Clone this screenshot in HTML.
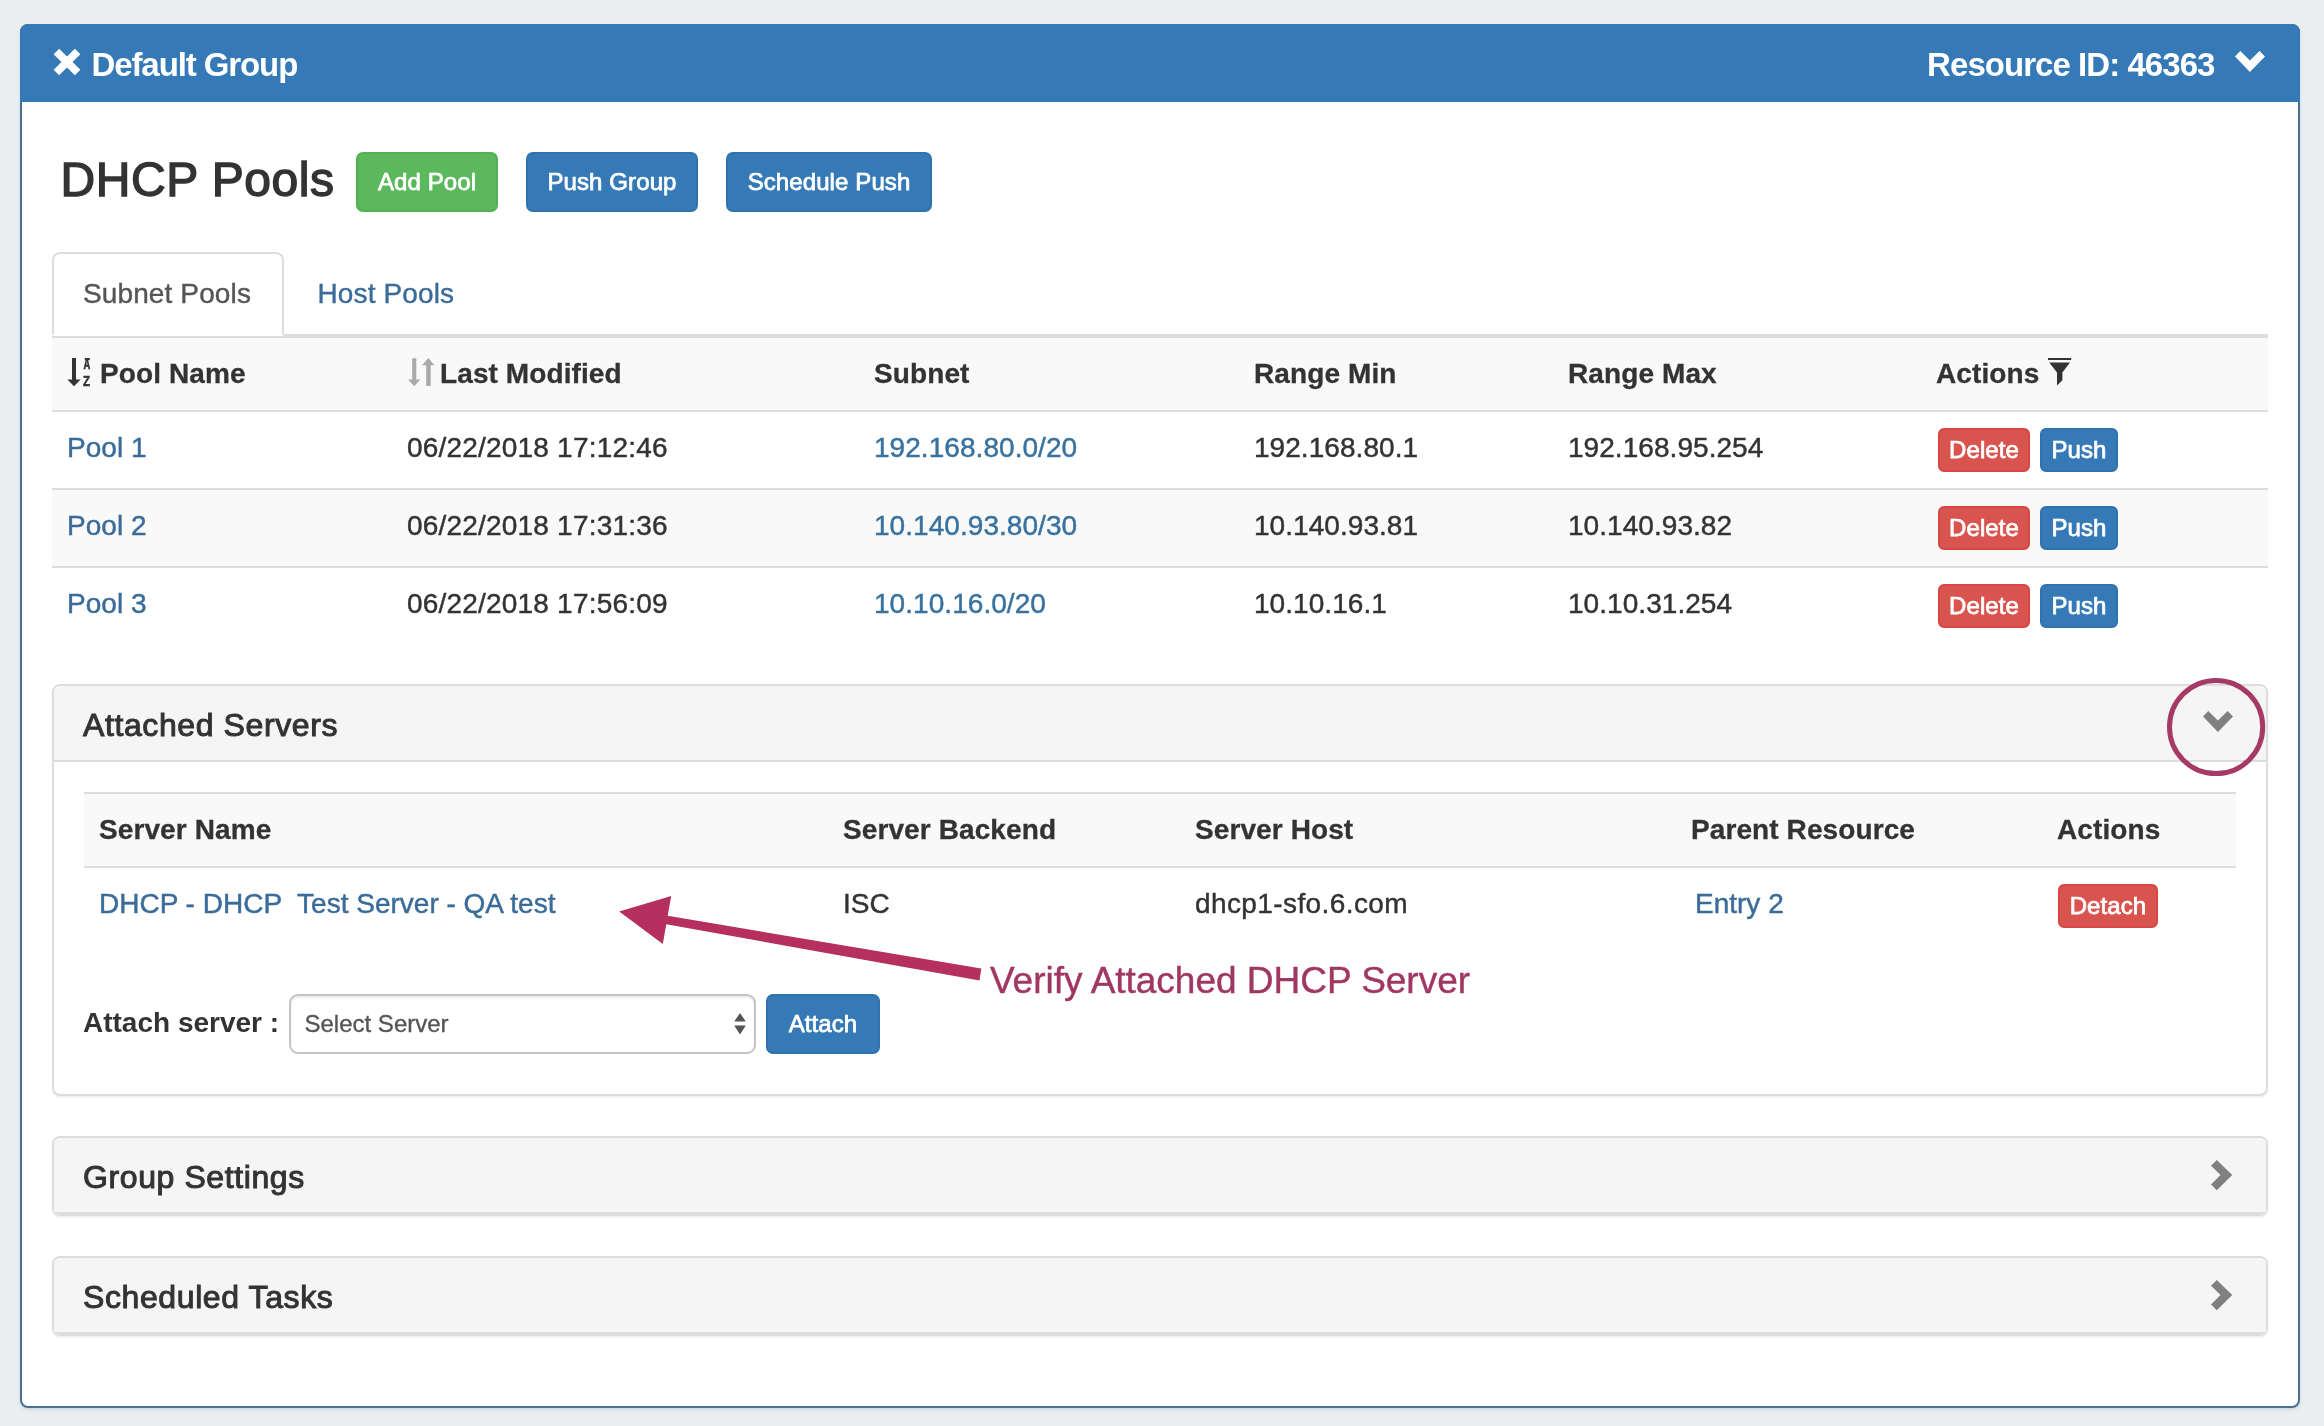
<!DOCTYPE html>
<html lang="en">
<head>
<meta charset="utf-8">
<title>DHCP Pools - Default Group</title>
<style>
*{box-sizing:border-box;}
html,body{margin:0;padding:0;}
body{width:2324px;height:1426px;overflow:hidden;background:#eaeef1;font-family:"Liberation Sans",sans-serif;font-size:28px;line-height:40px;color:#333;position:relative;}
a{color:#3b6b99;text-decoration:none;}
a.sn{color:#38729f;}
svg{display:block;position:absolute;overflow:visible;}
.abs{position:absolute;white-space:nowrap;}
#page{position:absolute;left:0;top:0;width:2324px;height:1426px;will-change:transform;}

/* outer panel */
.panel-main{position:absolute;left:20px;top:24px;width:2280px;height:1384px;background:#fff;border:2px solid #4d7091;border-radius:8px;box-shadow:0 2px 3px rgba(120,150,180,.25);}
.panel-main>.heading{position:absolute;left:-2px;top:-2px;width:2280px;height:78px;background:#357ab7;border-radius:8px 8px 0 0;color:#fff;font-weight:bold;font-size:33px;line-height:36px;}
.heading .title{left:71.5px;top:22.5px;letter-spacing:-1.1px;}
.heading .rid{right:85.5px;top:22.5px;letter-spacing:-.95px;}

/* title row */
h3.pools{position:absolute;margin:0;left:60.5px;top:152px;font-size:48px;line-height:56px;font-weight:normal;color:#333;white-space:nowrap;letter-spacing:.55px;-webkit-text-stroke:1.4px #333;}
.btn{position:absolute;display:block;color:#fff;-webkit-text-stroke:.75px #fff;letter-spacing:.1px;text-align:center;white-space:nowrap;font-size:24px;line-height:36px;border:2px solid transparent;border-radius:7px;padding:0;}
.btn-sm{height:60px;padding-top:10px;}
.btn-xs{height:44px;padding-top:2px;border-radius:6px;}
.btn-success{background:#5cb85c;border-color:#52b152;}
.btn-primary{background:#357ab7;border-color:#3072ab;}
.btn-danger{background:#d9534f;border-color:#d54843;}

/* tabs */
.nav-tabs{position:absolute;left:52px;top:252px;width:2216px;height:84px;margin:0;padding:0;list-style:none;border-bottom:2px solid #ddd;}
.nav-tabs li{position:absolute;top:0;height:84px;}
.nav-tabs li a{display:block;height:84px;padding:20px 30px;letter-spacing:.12px;-webkit-text-stroke:.4px;border:2px solid transparent;border-radius:8px 8px 0 0;line-height:40px;white-space:nowrap;}
.nav-tabs li.active a{color:#555;background:#fff;border-color:#ddd #ddd #fff #ddd;}

/* tables */
table{border-collapse:separate;border-spacing:0;table-layout:fixed;position:absolute;}
th,td{padding:0 0 0 15px;text-align:left;vertical-align:top;white-space:nowrap;overflow:visible;position:relative;}
th{font-weight:bold;letter-spacing:.1px;-webkit-text-stroke:.3px;}
table.pools{left:52px;top:336px;width:2216px;}
table.pools th{height:74px;padding-top:16px;border-top:2px solid #ddd;background:#f9f9f9;}
table.pools td{height:78px;padding-top:16px;letter-spacing:.05px;-webkit-text-stroke:.45px;border-top:2px solid #ddd;}
table.pools tr.odd td{background:#f9f9f9;}
table.pools td.dt{letter-spacing:.2px;}

/* sub panels */
.panel{position:absolute;left:52px;width:2216px;border:2px solid #ddd;border-radius:8px;background:#fff;box-shadow:0 2px 2px rgba(0,0,0,.05);}
.panel .ph{height:76px;background:#f5f5f5;border-bottom:2px solid #ddd;border-radius:6px 6px 0 0;position:relative;}
.panel .ph h4{margin:0;position:absolute;left:29px;top:21px;font-size:32px;line-height:36px;font-weight:normal;color:#333;white-space:nowrap;letter-spacing:.6px;-webkit-text-stroke:1px #333;}
table.servers{left:30px;top:106px;width:2152px;}
table.servers th{height:74px;padding-top:16px;border-top:2px solid #ddd;background:#f9f9f9;}
table.servers td{height:76px;padding-top:16px;-webkit-text-stroke:.45px;border-top:2px solid #ddd;}
.select{position:absolute;left:235px;top:308px;width:467px;height:60px;border:2px solid #c4c4c4;border-radius:9px;background:#fff;color:#555;font-size:24px;line-height:36px;padding:10px 0 0 13.5px;-webkit-text-stroke:.35px;box-shadow:inset 0 2px 2px rgba(0,0,0,.075);}
</style>
</head>
<body>
<div id="page">

<div class="panel-main">
  <div class="heading">
    <svg style="left:33px;top:24px" width="28" height="28" viewBox="-14 -14 28 28"><g transform="rotate(45)" fill="#fff"><rect x="-15" y="-3.9" width="30" height="7.8"/><rect x="-3.9" y="-15" width="7.8" height="30"/></g></svg>
    <span class="abs title">Default Group</span>
    <span class="abs rid">Resource ID: 46363</span>
    <svg style="left:2215px;top:27px" width="30" height="21" viewBox="0 0 30 21"><polygon fill="#fff" points="0,5.4 5.3,0 14.9,9.5 24.6,0 30,5.4 14.9,21"/></svg>
  </div>
</div>

<h3 class="pools">DHCP Pools</h3>
<a class="btn btn-sm btn-success" style="left:356px;top:152px;width:142px">Add Pool</a>
<a class="btn btn-sm btn-primary" style="left:526px;top:152px;width:172px">Push Group</a>
<a class="btn btn-sm btn-primary" style="left:726px;top:152px;width:206px">Schedule Push</a>

<ul class="nav-tabs">
  <li class="active" style="left:0"><a style="width:232px;padding-left:29px">Subnet Pools</a></li>
  <li style="left:233.5px"><a>Host Pools</a></li>
</ul>

<table class="pools">
  <colgroup><col style="width:340px"><col style="width:467px"><col style="width:380px"><col style="width:314px"><col style="width:368px"><col style="width:347px"></colgroup>
  <thead>
    <tr>
      <th><svg style="left:15px;top:20px" width="24" height="30" viewBox="0 0 24 30"><path fill="#333" d="M5 0h4v21.5h4.6L7 28.2 .4 21.5H5z"/><text x="0" y="11.4" font-family="Liberation Sans, sans-serif" font-weight="bold" font-size="15.5" fill="#333" stroke="#333" stroke-width=".7" transform="translate(16.6 0) scale(.6 1)">A</text><rect x="17.8" y="0" width="5" height="2.2" fill="#333"/><text x="0" y="27.6" font-family="Liberation Sans, sans-serif" font-weight="bold" font-size="15" fill="#333" stroke="#333" stroke-width=".6" transform="translate(16 0) scale(.76 1)">Z</text></svg><span style="padding-left:33px">Pool Name</span></th>
      <th><svg style="left:16px;top:20px" width="27" height="29" viewBox="0 0 27 29"><path fill="#aaa" d="M4.2 .3h4.1v21.2h4.1L6.2 28.2 0 21.5h4.2z"/><path fill="#aaa" d="M18.2 28h4.5V7.2h3.8L20.3 0 14 7.2h4.2z"/></svg><span style="padding-left:33px">Last Modified</span></th>
      <th>Subnet</th>
      <th>Range Min</th>
      <th>Range Max</th>
      <th>Actions<svg style="left:127px;top:20px" width="24" height="28" viewBox="0 0 24 28"><path fill="#333" d="M0 0h23.2v2H0z"/><path fill="#333" d="M1.2 4.4h20.8L14.4 14.6v7.6L9 27.6V14.6z"/></svg></th>
    </tr>
  </thead>
  <tbody>
    <tr class="first"><td><a>Pool 1</a></td><td class="dt">06/22/2018 17:12:46</td><td><a class="sn">192.168.80.0/20</a></td><td>192.168.80.1</td><td>192.168.95.254</td><td><a class="btn btn-xs btn-danger" style="left:17px;top:16px;width:92px">Delete</a><a class="btn btn-xs btn-primary" style="left:119px;top:16px;width:78px">Push</a></td></tr>
    <tr class="odd"><td><a>Pool 2</a></td><td class="dt">06/22/2018 17:31:36</td><td><a class="sn">10.140.93.80/30</a></td><td>10.140.93.81</td><td>10.140.93.82</td><td><a class="btn btn-xs btn-danger" style="left:17px;top:16px;width:92px">Delete</a><a class="btn btn-xs btn-primary" style="left:119px;top:16px;width:78px">Push</a></td></tr>
    <tr><td><a>Pool 3</a></td><td class="dt">06/22/2018 17:56:09</td><td><a class="sn">10.10.16.0/20</a></td><td>10.10.16.1</td><td>10.10.31.254</td><td><a class="btn btn-xs btn-danger" style="left:17px;top:16px;width:92px">Delete</a><a class="btn btn-xs btn-primary" style="left:119px;top:16px;width:78px">Push</a></td></tr>
  </tbody>
</table>

<div class="panel" style="top:684px;height:412px">
  <div class="ph"><h4>Attached Servers</h4>
    <svg style="left:2149px;top:25px" width="30" height="21" viewBox="0 0 30 21"><polygon fill="#808080" points="0,5.4 5.3,0 14.9,9.5 24.6,0 30,5.4 14.9,21"/></svg>
  </div>
  <table class="servers">
    <colgroup><col style="width:744px"><col style="width:352px"><col style="width:496px"><col style="width:366px"><col style="width:194px"></colgroup>
    <thead><tr><th>Server Name</th><th>Server Backend</th><th>Server Host</th><th>Parent Resource</th><th>Actions</th></tr></thead>
    <tbody><tr><td><a>DHCP - DHCP&nbsp; Test Server - QA test</a></td><td>ISC</td><td style="letter-spacing:.4px">dhcp1-sfo.6.com</td><td><a style="padding-left:4px">Entry 2</a></td><td><a class="btn btn-xs btn-danger" style="left:16px;top:16px;width:100px">Detach</a></td></tr></tbody>
  </table>
  <b class="abs" style="left:29px;top:317px">Attach server :</b>
  <div class="select">Select Server
    <svg style="left:443px;top:17px" width="12" height="22" viewBox="0 0 12 22"><path fill="#555" d="M6 0l5.8 8.6H.2zM6 21.6L.2 12.6h11.6z"/></svg>
  </div>
  <a class="btn btn-sm btn-primary" style="left:712px;top:308px;width:114px">Attach</a>
</div>

<div class="panel" style="top:1136px;height:80px">
  <div class="ph"><h4>Group Settings</h4>
    <svg style="left:2157px;top:22px" width="22" height="31" viewBox="0 0 22 31"><polygon fill="#808080" points="0,5.7 5.8,0 21.2,15 5.8,30.2 0,24.4 9.5,15"/></svg>
  </div>
</div>

<div class="panel" style="top:1256px;height:80px">
  <div class="ph"><h4>Scheduled Tasks</h4>
    <svg style="left:2157px;top:22px" width="22" height="31" viewBox="0 0 22 31"><polygon fill="#808080" points="0,5.7 5.8,0 21.2,15 5.8,30.2 0,24.4 9.5,15"/></svg>
  </div>
</div>

<!-- annotations -->
<svg style="left:0;top:0" width="2324" height="1426" viewBox="0 0 2324 1426">
  <circle cx="2216.1" cy="727" r="46.6" fill="none" stroke="#a53a66" stroke-width="5"/>
  <polygon fill="#b52f5f" points="619.2,911.6 671.2,896.1 667.7,915.8 981.3,968.6 979.5,980.5 666.3,924.2 662.8,943.9"/>
  <text x="990" y="993" font-family="Liberation Sans, sans-serif" font-size="37" fill="#a03762" stroke="#a03762" stroke-width=".4" letter-spacing="-.02">Verify Attached DHCP Server</text>
</svg>

</div>
</body>
</html>
